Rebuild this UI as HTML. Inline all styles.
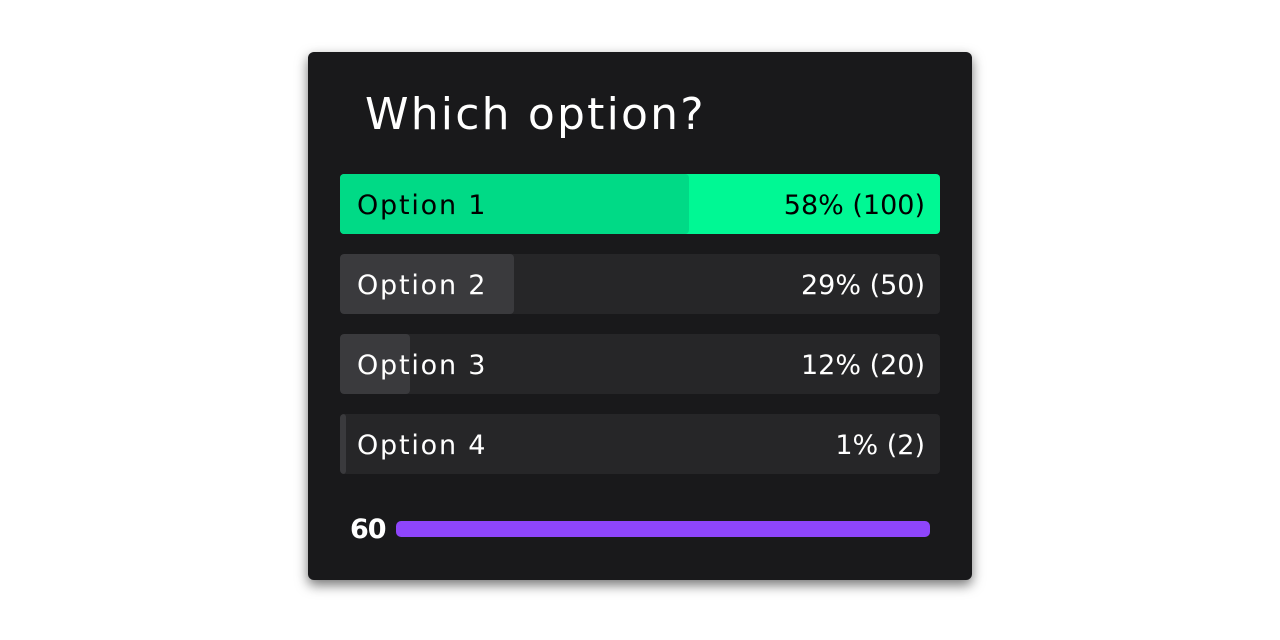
<!DOCTYPE html>
<html><head><style>
body{margin:0;width:1280px;height:640px;background:#fff;font-family:"DejaVu Sans","Liberation Sans",sans-serif;position:relative;overflow:hidden}
.card{position:absolute;left:308px;top:52px;width:664px;height:528px;background:#19191b;border-radius:6px;box-shadow:0 5px 12px rgba(0,0,0,.55)}
h1{position:absolute;left:57px;top:36px;margin:0;font-weight:normal;font-size:44px;color:#fff;line-height:54px;letter-spacing:2.2px}
.row{position:absolute;left:32px;width:600px;height:60px;background:#262628;border-radius:4px;overflow:hidden;color:#fff;font-size:27px}
.fill{position:absolute;left:0;top:0;bottom:0;background:#3a3a3d;border-radius:4px}
.l{position:absolute;left:17px;top:2px;line-height:60px;letter-spacing:1.8px}
.r{position:absolute;right:15px;top:2px;line-height:60px}
.win{background:#00f894;color:#000}
.win .fill{background:#00da86}
.t{position:absolute;left:42px;top:462px;color:#fff;font-size:27px;line-height:32px;font-weight:bold;letter-spacing:-1px}
.bar{position:absolute;left:88px;top:469px;width:534px;height:16px;background:#8e45fb;border-radius:5px}
</style></head><body>
<div class="card">
<h1>Which option?</h1>
<div class="row win" style="top:122px"><div class="fill" style="width:349px"></div><span class="l">Option 1</span><span class="r">58% (100)</span></div>
<div class="row" style="top:202px"><div class="fill" style="width:174px"></div><span class="l">Option 2</span><span class="r">29% (50)</span></div>
<div class="row" style="top:282px"><div class="fill" style="width:70px"></div><span class="l">Option 3</span><span class="r">12% (20)</span></div>
<div class="row" style="top:362px"><div class="fill" style="width:6px"></div><span class="l">Option 4</span><span class="r">1% (2)</span></div>
<div class="t">60</div>
<div class="bar"></div>
</div>
</body></html>
